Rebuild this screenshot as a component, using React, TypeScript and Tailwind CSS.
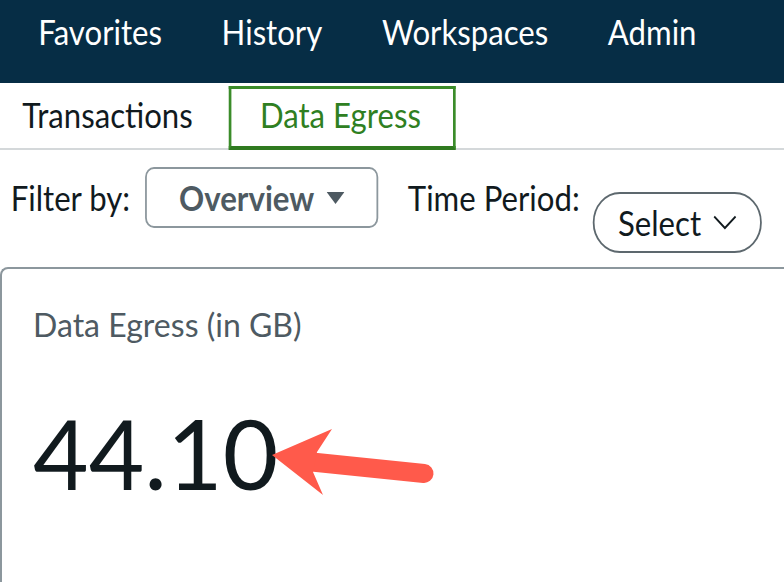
import React from 'react';

const navItems = ['Favorites', 'History', 'Workspaces', 'Admin'];

const App: React.FC = () => {
  return (
    <div className="relative w-[784px] h-[582px] overflow-hidden bg-white font-['Lato','Noto_Sans',sans-serif] text-[#111a1e]">
      {/* header area is drawn narrow, like the screenshot */}
      <div className="w-[881px] origin-top-left scale-x-[0.89]">
        {/* Top nav */}
        <div className="h-[83px] bg-[#062d45] flex items-start pl-[43px] pt-[14px] gap-[67px]">
          {navItems.map((item) => (
            <span key={item} className="text-white text-[35px] leading-none">
              {item}
            </span>
          ))}
        </div>

        {/* Tabs */}
        <div className="flex items-start h-[67px] border-b-2 border-[#d4d8da]">
          <div className="mt-[14px] pl-[25px] w-[257px] text-[35px] leading-none">Transactions</div>
          <div className="mt-[3px] h-[64px] w-[255px] pl-[32px] pt-[8px] border-[3px] border-b-4 border-[#3b8c2a] border-b-[#2f7a20] text-[35px] leading-none text-[#2f7f22]">
            Data Egress
          </div>
        </div>

        {/* Filters */}
        <div className="flex items-start pl-[12px] h-[117px]">
          <span className="mt-[30px] text-[35px] leading-none">Filter by:</span>
          <button className="ml-[17px] mt-[17px] w-[262px] h-[61px] rounded-[10px] border-2 border-[#8c979d] flex items-center pl-[36px] gap-[14px]">
            <span className="text-[35px] leading-none font-bold text-[#4e5a62]">Overview</span>
            <svg width="20" height="12" viewBox="0 0 20 12">
              <path d="M0 0 H20 L10 12 Z" fill="#4e5a62" />
            </svg>
          </button>
          <span className="ml-[33px] mt-[30px] text-[35px] leading-none">Time Period:</span>
          <button className="ml-[15px] mt-[42px] w-[190px] h-[61px] rounded-full border-2 border-[#5d686e] flex items-center pl-[26px] gap-[13px]">
            <span className="text-[35px] leading-none">Select</span>
            <svg width="27" height="15" viewBox="0 0 27 15">
              <path d="M1.5 1.5 L13.5 13 L25.5 1.5" fill="none" stroke="#111a1e" strokeWidth="2" />
            </svg>
          </button>
        </div>
      </div>

      {/* Card */}
      <div className="border-t-2 border-l-2 border-[#8c979d] rounded-tl-[8px] h-[320px] pl-[31px] pt-[39px]">
        <div className="text-[33px] leading-none text-[#4e5a62] inline-block origin-left scale-x-[0.97]">
          Data Egress (in GB)
        </div>
        <div className="mt-[62px] text-[96px] leading-none">44.10</div>
      </div>

      {/* Annotation arrow */}
      <svg className="absolute left-0 top-0 pointer-events-none" width="784" height="582">
        <line x1="312" y1="462" x2="424" y2="473.5" stroke="#ff5a4b" strokeWidth="19" strokeLinecap="round" />
        <polygon points="272,455 332,429 317,452 313,472 323,495" fill="#ff5a4b" />
      </svg>
    </div>
  );
};

export default App;
